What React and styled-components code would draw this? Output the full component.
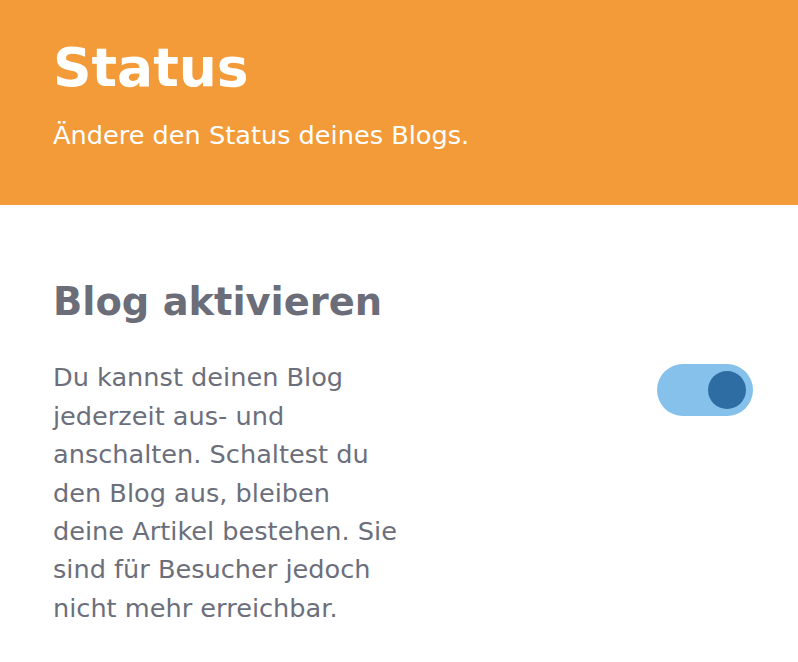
import React, { useState } from "react";
import styled, { createGlobalStyle } from "styled-components";

const Global = createGlobalStyle`
  html, body { margin: 0; padding: 0; background: #ffffff; }
  body { font-family: "DejaVu Sans", Verdana, sans-serif; }
  * { box-sizing: border-box; }
`;

const Header = styled.header`
  background: #f39b39;
  padding: 36px 53px 51px;
  color: #ffffff;
`;

const Title = styled.h1`
  margin: 0;
  font-size: 53.5px;
  font-weight: 700;
  line-height: normal;
`;

const Subtitle = styled.p`
  margin: 17px 0 0;
  font-size: 25.6px;
  line-height: 1.5;
`;

const Section = styled.section`
  padding: 74px 45px 0 53px;
`;

const SectionTitle = styled.h2`
  margin: 0;
  font-size: 38.4px;
  font-weight: 700;
  line-height: 1.2;
  color: #6b6d78;
`;

const Row = styled.div`
  display: flex;
  justify-content: space-between;
  align-items: flex-start;
  margin-top: 33px;
`;

const Description = styled.p`
  margin: 0;
  max-width: 350px;
  font-size: 25.6px;
  line-height: 1.5;
  color: #6c6f7b;
`;

const Track = styled.button`
  flex: none;
  width: 96px;
  height: 52px;
  margin-top: 6px;
  border: none;
  padding: 0 7px;
  border-radius: 26px;
  background: ${(p) => (p.$on ? "#85c1ea" : "#d5d8de")};
  display: flex;
  align-items: center;
  justify-content: ${(p) => (p.$on ? "flex-end" : "flex-start")};
  cursor: pointer;
`;

const Knob = styled.span`
  width: 38px;
  height: 38px;
  border-radius: 50%;
  background: ${(p) => (p.$on ? "#2e6da4" : "#ffffff")};
`;

export default function App() {
  const [on, setOn] = useState(true);
  return (
    <>
      <Global />
      <Header>
        <Title>Status</Title>
        <Subtitle>Ändere den Status deines Blogs.</Subtitle>
      </Header>
      <Section>
        <SectionTitle>Blog aktivieren</SectionTitle>
        <Row>
          <Description>
            Du kannst deinen Blog jederzeit aus- und anschalten. Schaltest du den
            Blog aus, bleiben deine Artikel bestehen. Sie sind für Besucher jedoch
            nicht mehr erreichbar.
          </Description>
          <Track $on={on} onClick={() => setOn(!on)} aria-label="Blog aktivieren">
            <Knob $on={on} />
          </Track>
        </Row>
      </Section>
    </>
  );
}
